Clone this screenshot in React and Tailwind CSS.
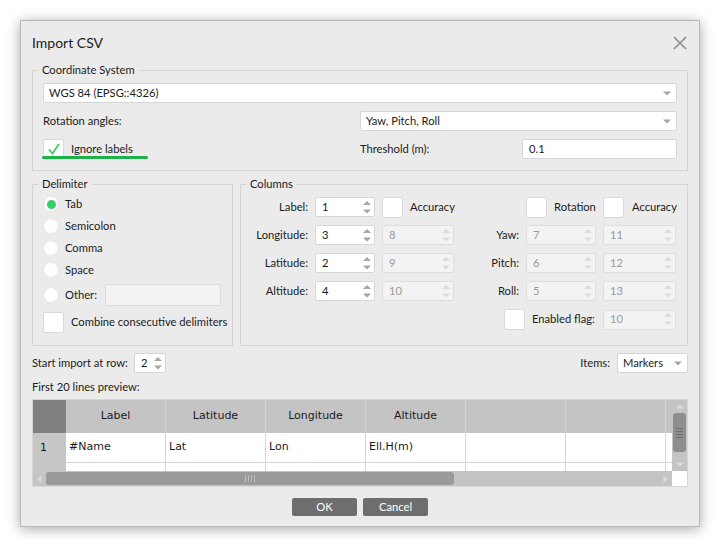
import React from 'react';

const Arrow = () => (
  <svg width="8" height="5" viewBox="0 0 8 5" className="shrink-0">
    <path d="M0 0.5 L8 0.5 L4 4.5 Z" fill="#a6a6a6" />
  </svg>
);

const Combo = ({ value, className = '' }) => (
  <div className={`flex h-[20px] items-center justify-between rounded-[2px] border border-[#d6d6d6] bg-white pl-[5px] pr-[5px] ${className}`}>
    <span>{value}</span>
    <Arrow />
  </div>
);

const SpinArrows = ({ disabled }) => (
  <svg width="8" height="13" viewBox="0 0 8 13" className="shrink-0">
    <path d="M0 4 L4 0 L8 4 Z" fill={disabled ? '#dcdcdc' : '#a6a6a6'} />
    <path d="M0 8.5 L8 8.5 L4 12.5 Z" fill={disabled ? '#dcdcdc' : '#a6a6a6'} />
  </svg>
);

const Spin = ({ value, w, disabled }) => (
  <div
    className={`flex h-[20px] ${w} items-center justify-between rounded-[2px] border pl-[6px] pr-[3px] ${
      disabled ? 'border-[#dedede] bg-[#f3f3f3] text-[#9a9a9a]' : 'border-[#d6d6d6] bg-white'
    }`}
  >
    <span>{value}</span>
    <SpinArrows disabled={disabled} />
  </div>
);

const Check = ({ checked }) => (
  <div className="flex h-[21px] w-[21px] shrink-0 items-center justify-center rounded-[2px] border border-[#d9d9d9] bg-white">
    {checked && (
      <svg width="12" height="12" viewBox="0 0 12 12">
        <path d="M1 6.5 L4.5 10.5 L11 1" fill="none" stroke="#43cc62" strokeWidth="1.8" />
      </svg>
    )}
  </div>
);

const Radio = ({ checked }) => (
  <div className="flex h-[16px] w-[16px] shrink-0 items-center justify-center rounded-full border border-[#e6e6e6] bg-white">
    {checked && <div className="h-[9px] w-[9px] rounded-full bg-[#34d06a]" />}
  </div>
);

const Legend = ({ children }) => (
  <legend className="ml-[5px] px-[4px] leading-[16px]">{children}</legend>
);

const cols = ['Label', 'Latitude', 'Longitude', 'Altitude', '', '', ''];
const row1 = ['#Name', 'Lat', 'Lon', 'Ell.H(m)', '', '', ''];

export default function App() {
  return (
    <div className="h-[546px] w-[720px] whitespace-nowrap bg-white p-[20px] font-[family-name:Lato,sans-serif] text-[11.2px] text-[#1b1b1b]">
      <div className="flex h-[507px] w-[680px] flex-col border border-[#b9b9b9] bg-[#ebebeb] px-[11px] shadow-[0_2px_12px_rgba(0,0,0,0.35)]">
        {/* title */}
        <div className="flex h-[41px] items-center justify-between pt-[3px]">
          <span className="text-[14px] leading-[20px]">Import CSV</span>
          <svg width="14" height="14" viewBox="0 0 14 14" className="mr-[1px]">
            <path d="M1 1 L13 13 M13 1 L1 13" stroke="#8c8c8c" strokeWidth="1.6" />
          </svg>
        </div>

        {/* coordinate system */}
        <fieldset className="min-w-0 border border-[#d3d3d3]">
          <Legend>Coordinate System</Legend>
          <div className="flex flex-col gap-[8px] px-[10px] pb-[11px] pt-[5px]">
            <Combo value="WGS 84 (EPSG::4326)" />
            <div className="flex h-[20px] items-center">
              <span className="w-[317px]">Rotation angles:</span>
              <Combo value="Yaw, Pitch, Roll" className="flex-1" />
            </div>
            <div className="flex h-[20px] items-center">
              <div className="relative flex w-[317px] items-center">
                <Check checked />
                <span className="ml-[7px]">Ignore labels</span>
                <div className="absolute left-[-1px] top-[17px] h-[3px] w-[106px] rounded-full bg-[#1fb04b]" />
              </div>
              <span className="w-[162px]">Threshold (m):</span>
              <div className="flex h-[20px] flex-1 items-center rounded-[2px] border border-[#d6d6d6] bg-white pl-[6px]">0.1</div>
            </div>
          </div>
        </fieldset>

        {/* delimiter + columns */}
        <div className="mt-[5px] flex gap-[7px]">
          <fieldset className="w-[201px] min-w-0 shrink-0 border border-[#d3d3d3]">
            <Legend>Delimiter</Legend>
            <div className="flex flex-col px-[10px] pb-[11px] pt-[1px]">
              {['Tab', 'Semicolon', 'Comma', 'Space'].map((t, i) => (
                <div key={t} className="flex h-[22px] items-center">
                  <Radio checked={i === 0} />
                  <span className="ml-[6px]">{t}</span>
                </div>
              ))}
              <div className="mt-[3px] flex h-[22px] items-center">
                <Radio />
                <span className="ml-[6px] w-[40px]">Other:</span>
                <div className="h-[22px] w-[116px] rounded-[2px] border border-[#dcdcdc] bg-[#f3f3f3]" />
              </div>
              <div className="mt-[6px] flex h-[21px] items-center">
                <Check />
                <span className="ml-[7px]">Combine consecutive delimiters</span>
              </div>
            </div>
          </fieldset>

          <fieldset className="w-[448px] min-w-0 shrink-0 border border-[#d3d3d3]">
            <Legend>Columns</Legend>
            <div className="flex flex-col gap-[8px] pb-[15px] pt-[5px]">
              <div className="flex h-[20px] items-center">
                <span className="w-[67px] text-right">Label:</span>
                <div className="ml-[7px]"><Spin value="1" w="w-[60px]" /></div>
                <div className="ml-[7px]"><Check /></div>
                <span className="ml-[7px] w-[44px]">Accuracy</span>
                <div className="ml-[72px]"><Check /></div>
                <span className="w-[56px] pl-[7px]">Rotation</span>
                <Check />
                <span className="pl-[8px]">Accuracy</span>
              </div>
              {[
                ['Longitude:', '3', '8', 'Yaw:', '7', '11'],
                ['Latitude:', '2', '9', 'Pitch:', '6', '12'],
                ['Altitude:', '4', '10', 'Roll:', '5', '13'],
              ].map((r) => (
                <div key={r[0]} className="flex h-[20px] items-center">
                  <span className="w-[67px] text-right">{r[0]}</span>
                  <div className="ml-[7px]"><Spin value={r[1]} w="w-[60px]" /></div>
                  <div className="ml-[7px]"><Spin value={r[2]} w="w-[72px]" disabled /></div>
                  <span className="w-[65px] text-right">{r[3]}</span>
                  <div className="ml-[7px]"><Spin value={r[4]} w="w-[70px]" disabled /></div>
                  <div className="ml-[7px]"><Spin value={r[5]} w="w-[73px]" disabled /></div>
                </div>
              ))}
              <div className="flex h-[21px] items-center">
                <div className="ml-[263px]"><Check /></div>
                <span className="ml-[7px] w-[64px]">Enabled flag:</span>
                <div className="ml-[7px]"><Spin value="10" w="w-[73px]" disabled /></div>
              </div>
            </div>
          </fieldset>
        </div>

        {/* start row / items */}
        <div className="mt-[7px] flex h-[20px] items-center">
          <span className="w-[102px]">Start import at row:</span>
          <Spin value="2" w="w-[32px]" />
          <span className="ml-auto">Items:</span>
          <Combo value="Markers" className="ml-[7px] w-[71px]" />
        </div>
        <div className="mt-[6px] leading-[16px]">First 20 lines preview:</div>

        {/* preview table */}
        <div className="mt-[4px] w-[656px] border border-[#d6d6d6] font-[family-name:'DejaVu_Sans',sans-serif] text-[11px]">
          <div className="flex h-[71px]">
            <div className="w-[639px] overflow-hidden">
              <div className="flex h-[33px] w-max">
                <div className="w-[33px] bg-[#808080]" />
                {cols.map((c, i) => (
                  <div key={i} className="flex w-[100px] items-center justify-center border-r border-[#d2d2d2] bg-[#c4c4c4]">{c}</div>
                ))}
              </div>
              <div className="flex h-[30px] w-max">
                <div className="flex w-[33px] items-center bg-[#c6c6c6] pl-[7px]">1</div>
                {row1.map((c, i) => (
                  <div key={i} className="flex w-[100px] items-center border-b border-r border-[#d4d4d4] bg-white pl-[3px]">{c}</div>
                ))}
              </div>
              <div className="flex h-[8px] w-max">
                <div className="w-[33px] bg-[#c6c6c6]" />
                {row1.map((c, i) => (
                  <div key={i} className="w-[100px] border-r border-[#d4d4d4] bg-white" />
                ))}
              </div>
            </div>
            <div className="flex w-[15px] flex-col items-center bg-[#c4c4c4]">
              <svg width="8" height="5" viewBox="0 0 8 5" className="mt-[4px]">
                <path d="M0 4.5 L4 0.5 L8 4.5 Z" fill="#dadada" />
              </svg>
              <div className="mt-[4px] flex h-[39px] w-[13px] flex-col items-center justify-center gap-[2px] rounded-[3px] bg-[#8e8e8e]">
                <div className="h-[1px] w-[7px] bg-[#6f6f6f]" />
                <div className="h-[1px] w-[7px] bg-[#6f6f6f]" />
                <div className="h-[1px] w-[7px] bg-[#6f6f6f]" />
                <div className="h-[1px] w-[7px] bg-[#6f6f6f]" />
              </div>
              <svg width="8" height="5" viewBox="0 0 8 5" className="mt-auto mb-[4px]">
                <path d="M0 0.5 L8 0.5 L4 4.5 Z" fill="#dadada" />
              </svg>
            </div>
          </div>
          <div className="flex h-[15px]">
            <div className="flex w-[639px] items-center bg-[#c4c4c4]">
              <svg width="5" height="8" viewBox="0 0 5 8" className="ml-[4px]">
                <path d="M4.5 0 L4.5 8 L0.5 4 Z" fill="#dadada" />
              </svg>
              <div className="ml-[4px] flex h-[13px] w-[408px] items-center justify-center gap-[2px] rounded-[3px] bg-[#9a9a9a]">
                <div className="h-[7px] w-[1px] bg-[#bdbdbd]" />
                <div className="h-[7px] w-[1px] bg-[#bdbdbd]" />
                <div className="h-[7px] w-[1px] bg-[#bdbdbd]" />
                <div className="h-[7px] w-[1px] bg-[#bdbdbd]" />
              </div>
              <svg width="5" height="8" viewBox="0 0 5 8" className="ml-auto mr-[4px]">
                <path d="M0.5 0 L0.5 8 L4.5 4 Z" fill="#dadada" />
              </svg>
            </div>
            <div className="w-[15px] bg-white" />
          </div>
        </div>

        {/* buttons */}
        <div className="mt-[11px] flex justify-center gap-[6px]">
          <button className="h-[18px] w-[65px] rounded-[2px] bg-[#6e6e6e] text-white">OK</button>
          <button className="h-[18px] w-[65px] rounded-[2px] bg-[#6e6e6e] text-white">Cancel</button>
        </div>
      </div>
    </div>
  );
}
